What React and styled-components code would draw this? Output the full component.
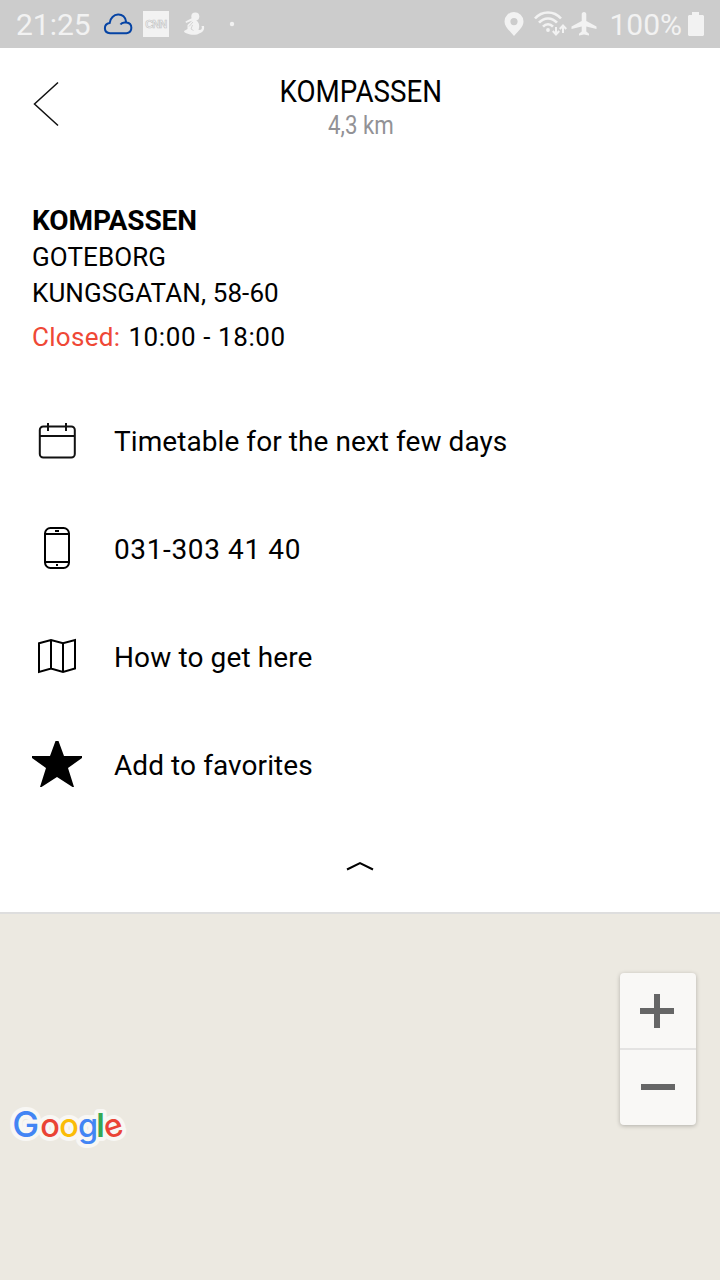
import React from "react";
import styled, { createGlobalStyle } from "styled-components";

const GlobalStyle = createGlobalStyle`
  *, *::before, *::after { box-sizing: border-box; }
  body { margin: 0; background: #fff; font-family: Roboto, "Liberation Sans", sans-serif; color: #000; }
`;

const Screen = styled.div`
  width: 720px;
  height: 1280px;
  display: flex;
  flex-direction: column;
  overflow: hidden;
  background: #fff;
`;

const StatusBar = styled.div`
  height: 48px;
  flex: none;
  display: flex;
  align-items: center;
  justify-content: space-between;
  padding: 0 15px 0 16px;
  background: #ccc;
  color: #f2f2f2;
`;

const StatusGroup = styled.div`
  display: flex;
  align-items: center;
  height: 48px;
`;

const StatusText = styled.span`
  font-size: 30px;
  line-height: 48px;
  padding-top: 2px;
`;

const Glyph = styled.svg`
  display: block;
  flex: none;
  margin-left: ${(p) => p.$gap || 0}px;
  margin-bottom: ${(p) => p.$lift || 0}px;
`;

const NewsBadge = styled.div`
  width: 26px;
  height: 26px;
  margin-left: 10px;
  display: flex;
  align-items: center;
  justify-content: center;
  background: #f2f2f2;
  color: #f2f2f2;
  font: bold 11px/26px "Liberation Sans", sans-serif;
  letter-spacing: -1px;
  -webkit-text-stroke: 0.6px #c4c4c4;
`;

const Header = styled.header`
  height: 112px;
  flex: none;
  display: grid;
  grid-template-columns: 80px 1fr 80px;
`;

const BackButton = styled.button`
  border: 0;
  background: none;
  padding: 33px 0 0 33px;
  display: flex;
  align-items: flex-start;
`;

const Titles = styled.div`
  display: flex;
  flex-direction: column;
  align-items: center;
  padding: 26px 0 0 1px;
`;

const Title = styled.h1`
  margin: 0;
  font-size: 31px;
  font-weight: 400;
  line-height: 36px;
  white-space: nowrap;
  transform: scaleX(0.895);
`;

const Distance = styled.div`
  font-size: 25px;
  line-height: 31px;
  color: #929296;
  white-space: nowrap;
  transform: scaleX(0.89);
`;

const Details = styled.section`
  flex: none;
  height: 228px;
  padding: 43px 32px 0;
`;

const StoreName = styled.h2`
  margin: 0;
  font-size: 28px;
  line-height: 36px;
  font-weight: 700;
  letter-spacing: -0.1px;
`;

const AddressLine = styled.div`
  font-size: 26px;
  line-height: 36px;
  letter-spacing: 0.1px;
`;

const Hours = styled.div`
  font-size: 26px;
  line-height: 36px;
  margin-top: 8px;
  letter-spacing: 0.6px;
`;

const Closed = styled.span`
  color: #ef4836;
  letter-spacing: 0.3px;
  margin-right: 1px;
`;

const Actions = styled.nav`
  flex: none;
  display: flex;
  flex-direction: column;
`;

const Action = styled.div`
  height: 108px;
  display: flex;
  align-items: center;
  padding-left: 32px;
  gap: 32px;
  font-size: 28px;
  line-height: 36px;
  letter-spacing: ${(p) => p.$spacing};
  white-space: nowrap;
`;

const ActionLabel = styled.span``;

const Collapse = styled.div`
  flex: 1;
  display: flex;
  justify-content: center;
  padding-top: 40px;
`;

const MapArea = styled.section`
  height: 368px;
  flex: none;
  border-top: 2px solid #dedede;
  background: #ece9e1;
  display: flex;
  justify-content: space-between;
  padding: 59px 24px 0 4px;
`;

const Logo = styled.svg`
  display: block;
  margin-top: 123px;
  overflow: visible;
  font-family: Inter, Roboto, sans-serif;
`;

const ZoomControls = styled.div`
  width: 76px;
  height: 152px;
  display: flex;
  flex-direction: column;
  border-radius: 4px;
  background: #f9f8f6;
  box-shadow: 0 1px 4px rgba(0, 0, 0, 0.25);
`;

const ZoomButton = styled.div`
  height: ${(p) => (p.$divided ? 77 : 75)}px;
  padding: ${(p) => (p.$divided ? "22px 0 0 21px" : "21px 0 0 20px")};
  border-top: ${(p) => (p.$divided ? "2px solid #e4e3e2" : "0")};
`;

const CalendarIcon = () => (
  <Glyph width="50" height="50" viewBox="0 0 50 50" fill="none" stroke="#111" strokeWidth="2">
    <rect x="7.800" y="9.500" width="35" height="31" rx="3.500" />
    <path d="M8 19H43M16 6V14M34 6V14" />
  </Glyph>
);

const PhoneIcon = () => (
  <Glyph $lift={4} width="50" height="50" viewBox="0 0 50 50" fill="none" stroke="#000" strokeWidth="2">
    <rect x="13" y="5" width="24" height="40" rx="5.500" />
    <path d="M13 11H37M13 39H37M23 8H27M24 42H26" />
  </Glyph>
);

const MapIcon = () => (
  <Glyph $lift={4} width="50" height="50" viewBox="0 0 50 50" fill="none" stroke="#000" strokeWidth="2">
    <path d="M7 12.300L19 9L31 12.300L43 9V37.500L31 41L19 37.500L7 41ZM19 9V37.500M31 12.300V41" />
  </Glyph>
);

const StarIcon = () => (
  <Glyph $lift={4} width="50" height="50" viewBox="0 0 50 50">
    <path d="M23.500 2H26.500L32 17H50V19L36 29L42 48H40.500L25 38L9.500 48H8L14 29L0 19V17H18Z" />
  </Glyph>
);

const actions = [
  { label: "Timetable for the next few days", Icon: CalendarIcon, spacing: "0.07px" },
  { label: "031-303 41 40", Icon: PhoneIcon, spacing: "0.62px" },
  { label: "How to get here", Icon: MapIcon, spacing: "0.12px" },
  { label: "Add to favorites", Icon: StarIcon, spacing: "0.08px" },
];

const letters = [
  { ch: "G", x: 8.200, size: 36, weight: 500, fill: "#4285f4" },
  { ch: "o", x: 36.200, size: 32.500, weight: 500, fill: "#ea4335" },
  { ch: "o", x: 55.200, size: 32.500, weight: 500, fill: "#fbbc05" },
  { ch: "g", x: 74, size: 32.500, weight: 500, fill: "#4285f4" },
  { ch: "l", x: 92.300, size: 32.500, weight: 600, fill: "#34a853" },
  { ch: "e", x: 100, size: 32, weight: 500, fill: "#ea4335", rotate: -18 },
];

const LogoLetters = ({ halo }) =>
  letters.map((l, i) => (
    <text
      key={i}
      x={l.x}
      y="41"
      fontSize={l.size}
      fontWeight={l.weight}
      fill={halo ? "#f8f7f4" : l.fill}
      stroke={halo ? "#f8f7f4" : "none"}
      strokeWidth={halo ? 8 : 0}
      strokeLinejoin="round"
      aria-hidden={halo}
      transform={l.rotate ? `rotate(${l.rotate} ${l.x + 9} 32)` : undefined}
    >
      {l.ch}
    </text>
  ));

export default function App() {
  return (
    <Screen>
      <GlobalStyle />
      <StatusBar>
        <StatusGroup>
          <StatusText>21:25</StatusText>
          <Glyph $gap={12} width="30" height="24" viewBox="0 0 30 24" fill="none" stroke="#0543a4" strokeWidth="2">
            <path d="M7 21.200H23.500C30 20.500 30 11 23.300 10.500C22.500 -0.800 7.500 0.500 6.700 11C0 12 0.500 21 7 21.200ZM17.500 12.500C18.500 10.800 20.500 10 23.300 10.600" />
          </Glyph>
          <NewsBadge>CNN</NewsBadge>
          <Glyph $gap={15} width="22" height="26" viewBox="0 0 22 26" fill="#f2f2f2">
            <circle cx="11.300" cy="5.500" r="4" />
            <path d="M1.500 10.500L9 6.500L12 9C16 12 15.500 16 14.500 19C17.500 19.500 18.500 17.500 17.500 15H20C21 20 17 22 15 22.500C14 24 7 24.500 3 22.500C1 22 0 21 0 20L3.500 18V14L8.500 9.500L2 12Z" />
            <path d="M9 11L5 15.500M8.500 14L7 18L9.500 19.500" fill="none" stroke="#ccc" strokeWidth="0.800" />
          </Glyph>
          <Glyph $gap={23} width="6" height="6" viewBox="0 0 6 6" fill="#f2f2f2">
            <circle cx="3" cy="3" r="2.200" />
          </Glyph>
        </StatusGroup>
        <StatusGroup>
          <Glyph width="20" height="24" viewBox="0 0 20 24" fill="#f2f2f2" fillRule="evenodd">
            <path d="M10 0A9.500 9.500 0 0 0 .5 9.500C.5 15 6 19 10 24C14 19 19.500 15 19.500 9.500A9.500 9.500 0 0 0 10 0ZM10 6A3.600 3.600 0 1 1 10 13.200A3.600 3.600 0 1 1 10 6Z" />
          </Glyph>
          <Glyph $gap={10} width="34" height="26" viewBox="0 0 34 26" fill="none" stroke="#f2f2f2" strokeWidth="2.600">
            <path d="M1 7.500C8 -.5 20 -.5 27 7.500M5 11.700C10 6 18 6 23 11.700M9 15.700C12 12.500 16 12.500 19 15.700" />
            <circle cx="14" cy="19" r="1.900" fill="#f2f2f2" stroke="none" />
            <path d="M22 16V23M18.800 20L22 23.500L25.200 20M29 22V15M25.800 18L29 14.500L32.200 18" strokeWidth="2" />
          </Glyph>
          <Glyph $gap={3} width="26" height="26" viewBox="0 0 26 26" fill="#f2f2f2">
            <path d="M13 1C14.500 1 15.300 2 15.300 3.500V10L25.500 15.500V18L15.300 15.500V20.500L18 22.800V24.500L13 23.500L8 24.500V22.800L10.700 20.500V15.500L.5 18V15.500L10.700 10V3.500C10.700 2 11.500 1 13 1Z" />
          </Glyph>
          <Glyph width="12" height="1" />
          <StatusText>100%</StatusText>
          <Glyph $gap={5} width="18" height="26" viewBox="0 0 18 26" fill="#f2f2f2">
            <path d="M5 1H12V4H16L17 5V24L16 25H2L1 24V5L2 4H5Z" />
          </Glyph>
        </StatusGroup>
      </StatusBar>
      <Header>
        <BackButton aria-label="Back">
          <svg width="27" height="46" viewBox="0 0 27 46" fill="none" stroke="#111" strokeWidth="1.500">
            <path d="M25 1.500L1.500 23L25 44.500" />
          </svg>
        </BackButton>
        <Titles>
          <Title>KOMPASSEN</Title>
          <Distance>4,3 km</Distance>
        </Titles>
      </Header>
      <Details>
        <StoreName>KOMPASSEN</StoreName>
        <AddressLine>GOTEBORG</AddressLine>
        <AddressLine>KUNGSGATAN, 58-60</AddressLine>
        <Hours>
          <Closed>Closed:</Closed> 10:00 - 18:00
        </Hours>
      </Details>
      <Actions>
        {actions.map(({ label, Icon, spacing }) => (
          <Action key={label} $spacing={spacing}>
            <Icon />
            <ActionLabel>{label}</ActionLabel>
          </Action>
        ))}
      </Actions>
      <Collapse>
        <svg width="28" height="12" viewBox="0 0 28 12" fill="none" stroke="#000" strokeWidth="2">
          <path d="M1 9.500L14 3L27 9.500" />
        </svg>
      </Collapse>
      <MapArea>
        <Logo width="130" height="60" viewBox="0 0 130 60" aria-label="Google">
          <LogoLetters halo />
          <LogoLetters />
        </Logo>
        <ZoomControls>
          <ZoomButton>
            <svg width="34" height="34" viewBox="0 0 34 34" stroke="#666" strokeWidth="6">
              <path d="M0 17H34M17 0V34" />
            </svg>
          </ZoomButton>
          <ZoomButton $divided>
            <svg width="34" height="34" viewBox="0 0 34 34" stroke="#666" strokeWidth="6">
              <path d="M0 15H34" />
            </svg>
          </ZoomButton>
        </ZoomControls>
      </MapArea>
    </Screen>
  );
}
